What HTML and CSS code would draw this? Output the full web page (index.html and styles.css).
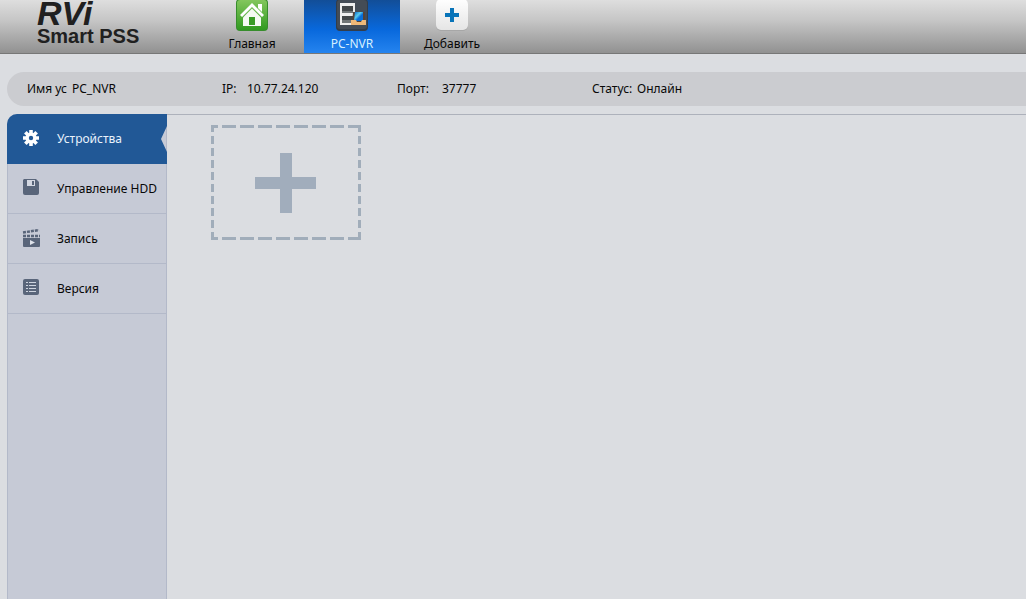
FILE: index.html
```html
<!DOCTYPE html>
<html lang="ru">
<head>
<meta charset="utf-8">
<title>RVi Smart PSS</title>
<link rel="stylesheet" href="styles.css">
</head>
<body>
<header class="topbar">
  <div class="brand">
    <span class="brand-mark">RVi</span>
    <span class="brand-name">Smart PSS</span>
  </div>
  <nav class="tabs">
    <a class="tab" href="#home">
      <svg class="tab-icon" viewBox="0 0 32 32" aria-hidden="true">
        <defs><linearGradient id="green" x2="0" y2="1"><stop offset="0" stop-color="#83c65d"/><stop offset="1" stop-color="#30991f"/></linearGradient></defs>
        <rect width="32" height="32" rx="4" fill="#378d2c"/>
        <rect x="1" y="1" width="30" height="30" rx="3" fill="url(#green)"/>
        <path d="M16 4 28 16l-2 2L16 8 6 18l-2-2zM22 5h4v8l-4-4z" fill="#fff"/>
        <path d="M7 18.500l9-9 9 9V27H7z" fill="#f5faf3"/>
        <path d="M13 18h6v8h-6z" fill="#399b25"/>
      </svg>
      <span>Главная</span>
    </a>
    <a class="tab tab-active" href="#nvr" aria-current="page">
      <svg class="tab-icon" viewBox="0 0 32 32" aria-hidden="true">
        <defs><linearGradient id="screen" x2="1" y2="1"><stop offset="0" stop-color="#0864c6"/><stop offset=".4" stop-color="#58cbee"/><stop offset=".6" stop-color="#086ed9"/></linearGradient></defs>
        <rect width="32" height="32" rx="4" fill="#333d49"/>
        <rect x="1" y="1" width="30" height="29" rx="3" fill="#444c56"/>
        <path d="M4 4h15v22H4z" fill="#eee"/>
        <path d="M6 7h11v7H6zM6 17h11v7H6z" fill="#424648"/>
        <path d="M6 12h11v2H6zM6 21h11v3H6z" fill="#707577"/>
        <path d="M17 13h12v13H16z" fill="#55433a"/>
        <path d="M19 13h8v9h-9z" fill="url(#screen)"/>
        <path d="M15 21h5l1 2h4l1-2h4v5H15z" fill="#efb878"/>
      </svg>
      <span>PC-NVR</span>
    </a>
    <a class="tab" href="#add">
      <svg class="tab-icon" viewBox="0 0 32 32" aria-hidden="true">
        <defs><linearGradient id="white" x2="0" y2="1"><stop offset="0" stop-color="#fff"/><stop offset="1" stop-color="#e5e5e5"/></linearGradient></defs>
        <rect y="1" width="32" height="31" rx="5" fill="#a7a7a7"/>
        <rect width="32" height="31" rx="5" fill="url(#white)"/>
        <path d="M14 9h4v5h5v4h-5v5h-4v-5H9v-4h5z" fill="#0874b9"/>
      </svg>
      <span>Добавить</span>
    </a>
  </nav>
</header>
<dl class="info">
  <div class="info-item"><dt class="term term-name">Имя ус</dt><dd>PC_NVR</dd></div>
  <div class="info-item"><dt class="term term-ip">IP:</dt><dd>10.77.24.120</dd></div>
  <div class="info-item"><dt class="term term-port">Порт:</dt><dd>37777</dd></div>
  <div class="info-item"><dt class="term term-status">Статус:</dt><dd>Онлайн</dd></div>
</dl>
<div class="workspace">
  <nav class="sidebar">
    <a class="side-link side-active" href="#devices" aria-current="page">
      <svg class="side-icon" viewBox="0 0 18 18" aria-hidden="true">
        <g fill="#fff"><circle cx="9" cy="9" r="5.500"/><path id="tooth" d="M7.200 1h3.600v16H7.200z"/><use href="#tooth" transform="rotate(45 9 9)"/><use href="#tooth" transform="rotate(90 9 9)"/><use href="#tooth" transform="rotate(135 9 9)"/></g><circle cx="9" cy="9" r="2.200" fill="#215896"/>
      </svg>
      <span>Устройства</span>
    </a>
    <a class="side-link" href="#hdd">
      <svg class="side-icon" viewBox="0 0 18 18" aria-hidden="true">
        <path d="M2 0h12l3 3v11q0 2-2 2H3q-2 0-2-2V1z" fill="#59657a"/><path d="M5 1h8v6H5z" fill="#d4d8e2"/><path d="M10 2h2v4h-2z" fill="#59657a"/>
      </svg>
      <span>Управление HDD</span>
    </a>
    <a class="side-link" href="#record">
      <svg class="side-icon" viewBox="0 0 18 18" aria-hidden="true">
        <path d="M1 9h17v8q0 1-1 1H2q-1 0-1-1z" fill="#59657a"/><path d="M8 11l5 2.500L8 16z" fill="#dfe3eb"/>
        <path d="M1 3.500 17 1M1 7h17" stroke="#59657a" stroke-width="2.500" stroke-dasharray="3 1"/>
      </svg>
      <span>Запись</span>
    </a>
    <a class="side-link" href="#version">
      <svg class="side-icon" viewBox="0 0 18 18" aria-hidden="true">
        <rect x="1" width="16" height="16" rx="2" fill="#59657a"/><path d="M4 3.500h2m1 0h7M4 6.500h2m1 0h7M4 9.500h2m1 0h7M4 12.500h2m1 0h7" stroke="#ced4df"/>
      </svg>
      <span>Версия</span>
    </a>
  </nav>
  <main class="content">
    <button class="add-tile" type="button" aria-label="Добавить устройство">
      <svg class="add-art" viewBox="0 0 150 115" aria-hidden="true">
        <path d="M0 1.500h150M0 113.500h150" stroke="#a1adba" stroke-width="3" stroke-dasharray="14 4" stroke-dashoffset="7"/>
        <path d="M1.500 0v115M148.500 0v115" stroke="#a1adba" stroke-width="3" stroke-dasharray="8 4" stroke-dashoffset="1"/>
        <path d="M69 28h12v24h24v12H81v24H69V64H44V52h25z" fill="#a1adbc"/>
      </svg>
    </button>
  </main>
</div>
</body>
</html>
```
FILE: styles.css
```css
* { box-sizing: border-box; }
body {
  margin: 0;
  min-height: 100vh;
  display: flex;
  flex-direction: column;
  background: #dbdde1;
  color: #080808;
  font: 12px/16px "Noto Sans", "Open Sans", sans-serif;
}
a { color: inherit; text-decoration: none; }
.topbar {
  display: flex;
  height: 54px;
  overflow: hidden;
  background: linear-gradient(#dedede, #c6c6c6 38%, #919191);
  border-bottom: 1px solid #777;
}
.brand {
  display: flex;
  flex-direction: column;
  justify-content: flex-end;
  width: 204px;
  padding: 0 0 6px 37px;
  color: #202020;
  font-family: "Liberation Sans", Arial, sans-serif;
  font-weight: bold;
}
.brand-mark { font-size: 34px; font-style: italic; line-height: 24px; }
.brand-name { font-size: 20px; line-height: 22px; }
.tabs { display: flex; gap: 4px; }
.tab {
  display: flex;
  flex-direction: column;
  align-items: center;
  justify-content: flex-end;
  gap: 5px;
  width: 96px;
  padding-bottom: 1px;
}
.tab-active { color: #d7f0ff; background: linear-gradient(#124e98, #0868dc 55%, #2584ef); }
.tab-icon { width: 32px; height: 32px; flex: none; }
.info {
  display: grid;
  grid-template-columns: 195px 175px 195px 1fr;
  align-items: center;
  min-height: 34px;
  margin: 18px 0 8px 7px;
  padding-left: 20px;
  background: #cbccd0;
  border-radius: 17px 0 0 17px;
}
.info-item { display: flex; }
.info dd { margin: 0; }
.term { flex: none; white-space: nowrap; }
.term-name, .term-port, .term-status { width: 45px; }
.term-ip { width: 25px; }
.workspace { display: flex; flex: 1; margin-left: 7px; }
.sidebar {
  width: 160px;
  background: #c6cad6;
  border: solid #b3b9c9;
  border-width: 0 1px;
  border-radius: 10px 0 0 0;
}
.side-link {
  display: flex;
  align-items: center;
  gap: 17px;
  height: 50px;
  padding-left: 14px;
  border-bottom: 1px solid #b3b9c9;
}
.side-active {
  margin: 0 -1px;
  padding-left: 15px;
  color: #e9f2fc;
  background: #215896;
  border-color: #215896;
  border-radius: 10px 0 0 0;
  clip-path: polygon(0 0, 100% 0, 100% 12px, calc(100% - 6px) 25px, 100% 38px, 100% 100%, 0 100%);
}
.side-icon { width: 18px; height: 18px; margin-bottom: 2px; flex: none; }
.content { flex: 1; padding: 10px 44px; border-top: 1px solid #adb1bb; }
.add-tile { display: block; padding: 0; border: 0; background: none; cursor: pointer; }
.add-art { display: block; width: 150px; height: 115px; }
```
